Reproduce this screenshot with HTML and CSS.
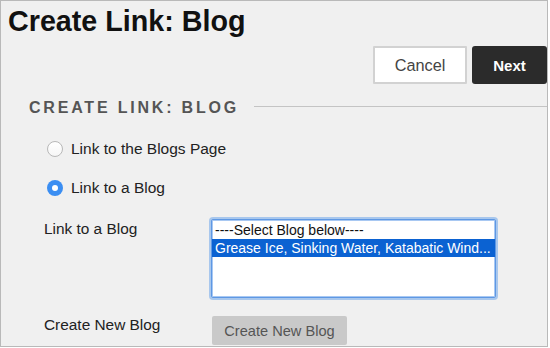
FILE: index.html
```html
<!DOCTYPE html>
<html lang="en">
<head>
    <meta charset="UTF-8">
    <title>Create Link: Blog</title>
    <link rel="stylesheet" href="styles.css">
</head>
<body>
    <div class="frame">
        <h1 class="page-title">Create Link: Blog</h1>

        <div class="actions">
            <button class="btn btn-cancel">Cancel</button>
            <button class="btn btn-next">Next</button>
        </div>

        <div class="section-head">
            <h2 class="section-title">CREATE LINK: BLOG</h2>
            <span class="section-rule"></span>
        </div>

        <!-- Варианты ссылки -->
        <label class="radio-row">
            <span class="radio"></span>
            <span class="radio-text">Link to the Blogs Page</span>
        </label>
        <label class="radio-row radio-row-second">
            <span class="radio radio-checked"></span>
            <span class="radio-text">Link to a Blog</span>
        </label>

        <div class="field-row field-row-list">
            <span class="field-label">Link to a Blog</span>
            <div class="listbox">
                <div class="listbox-option">----Select Blog below----</div>
                <div class="listbox-option selected">Grease Ice, Sinking Water, Katabatic Wind...</div>
            </div>
        </div>

        <div class="field-row field-row-create">
            <span class="field-label">Create New Blog</span>
            <button class="btn-grey">Create New Blog</button>
        </div>
    </div>
</body>
</html>
```

FILE: styles.css
```css
body {
    margin: 0;
    font-family: "Liberation Sans", Arial, sans-serif;
    color: #222;
}

.frame {
    box-sizing: border-box;
    width: 548px;
    height: 347px;
    border: 1px solid #b9b9b9;
    background-color: #f0f0f0;
    overflow: hidden;
}

.page-title {
    margin: 4px 0 0;
    padding-left: 7px;
    font-size: 28.7px;
    line-height: 32px;
    font-weight: bold;
    color: #111;
}

/* Кнопки */
.actions {
    display: flex;
    justify-content: flex-end;
    gap: 5px;
    margin-top: 9px;
}

.btn {
    box-sizing: border-box;
    height: 38px;
    font-family: "Liberation Sans", Arial, sans-serif;
    cursor: pointer;
}

.btn-cancel {
    width: 94px;
    background-color: #fff;
    border: 2px solid #d2d2d2;
    border-radius: 1px;
    font-size: 16.3px;
    color: #444;
}

.btn-next {
    width: 75px;
    background-color: #2b2b2b;
    border: none;
    border-radius: 3px;
    font-size: 15px;
    font-weight: bold;
    color: #fff;
}

.section-head {
    display: flex;
    align-items: flex-start;
    margin-top: 14px;
    padding-left: 28px;
}

.section-title {
    margin: 0;
    font-size: 16px;
    line-height: 20px;
    font-weight: bold;
    letter-spacing: 2.8px;
    color: #555;
}

.section-rule {
    flex: 1;
    height: 1px;
    margin-top: 8px;
    margin-left: 15px;
    background-color: #c4c4c4;
}

/* Радио */
.radio-row {
    display: flex;
    align-items: center;
    gap: 8px;
    height: 20px;
    margin-top: 21px;
    padding-left: 46px;
    font-size: 15.5px;
}

.radio-row-second {
    margin-top: 19px;
}

.radio {
    box-sizing: border-box;
    width: 16px;
    height: 16px;
    border-radius: 50%;
    border: 1px solid #b8b8b8;
    background: linear-gradient(#fff, #f6f6f6);
    display: flex;
    align-items: center;
    justify-content: center;
}

.radio-checked {
    border: none;
    background: #3b8ef2;
}

.radio-checked::after {
    content: "";
    width: 6px;
    height: 6px;
    border-radius: 50%;
    background-color: #fff;
}

.field-row {
    display: flex;
    align-items: flex-start;
    padding-left: 43px;
    font-size: 15.4px;
}

.field-row-list {
    margin-top: 21px;
}

.field-row-create {
    margin-top: 18px;
}

.field-label {
    width: 167px;
    line-height: 20px;
}

.field-row-create .field-label {
    line-height: 18px;
}

.listbox {
    box-sizing: border-box;
    width: 285px;
    height: 79px;
    padding: 1px 0;
    background-color: #fff;
    border: 1px solid #5e98e4;
    border-radius: 2px;
    box-shadow: 0 0 0 2px rgba(110, 165, 235, 0.55), inset 0 0 0 1px #a8c8f2;
    overflow: hidden;
}

.listbox-option {
    height: 18px;
    line-height: 18px;
    padding-left: 3px;
    font-size: 14px;
    color: #111;
    white-space: nowrap;
    overflow: hidden;
}

.listbox-option.selected {
    background-color: #0b62d2;
    color: #fff;
}

.btn-grey {
    box-sizing: border-box;
    width: 135px;
    height: 29px;
    margin-left: 1px;
    background-color: #c9c9c9;
    border: none;
    border-radius: 2px;
    font-family: "Liberation Sans", Arial, sans-serif;
    font-size: 14.6px;
    color: #555;
}
```
